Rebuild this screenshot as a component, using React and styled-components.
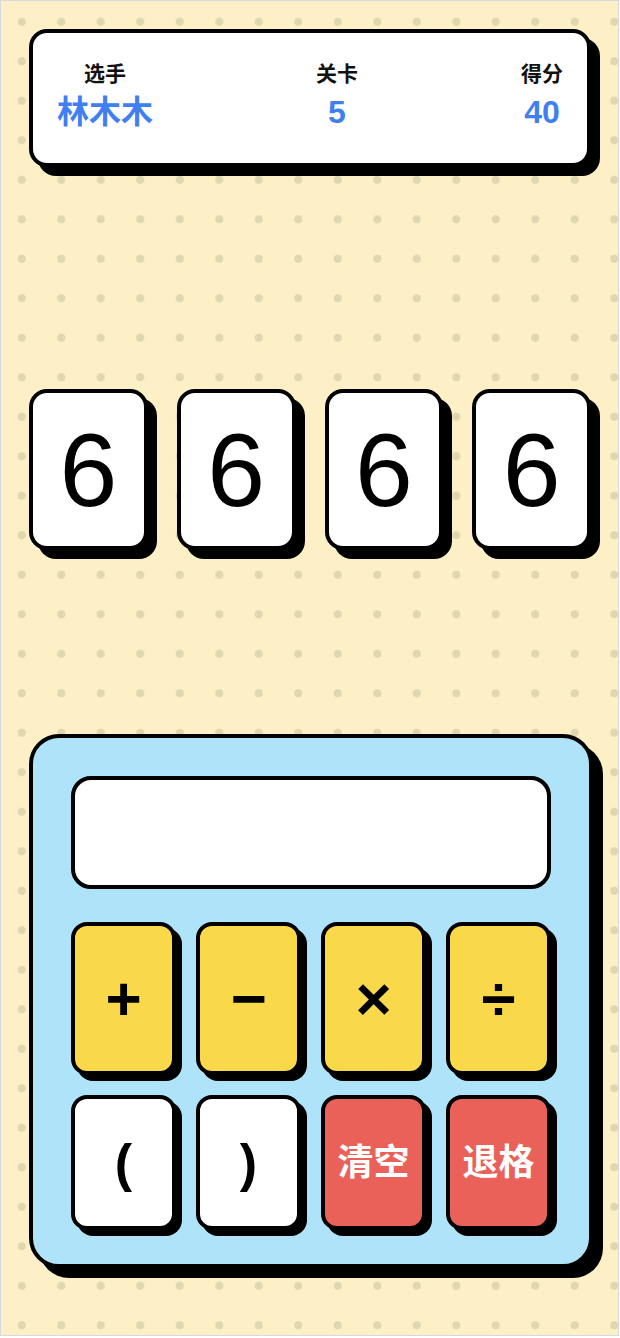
import React from "react";
import styled, { createGlobalStyle } from "styled-components";

const Global = createGlobalStyle`
  html, body { margin: 0; padding: 0; background: #ffffff; }
  body { font-family: "Liberation Sans", "Noto Sans CJK SC", sans-serif; }
  * { box-sizing: border-box; }
`;

const Page = styled.div`
  width: 619px;
  height: 1336px;
  border: 1px solid #d6d9df;
  background-color: #fdf0c7;
  background-image: radial-gradient(circle, #e0d7b1 3.9px, transparent 4.4px);
  background-size: 39.5px 39.5px;
  background-position: 1px 1px;
  padding: 28px 0 0 28px;
  display: flex;
  flex-direction: column;
`;

const Card = styled.div`
  background: ${(p) => p.$bg || "#ffffff"};
  border: 4px solid #000;
  border-radius: ${(p) => p.$radius || 16}px;
  box-shadow: ${(p) => p.$shadow || 8}px ${(p) => p.$shadow || 8}px 0 #000;
`;

const Header = styled(Card)`
  width: 562px;
  height: 138px;
  padding: 0 24px;
  display: flex;
  justify-content: space-between;
  align-items: center;
`;

const Stat = styled.div`
  display: flex;
  flex-direction: column;
  align-items: center;
  margin-top: -4px;
`;

const Label = styled.div`
  font-size: 21px;
  font-weight: 700;
  line-height: 28px;
  color: #111;
`;

const Value = styled.div`
  font-size: 32px;
  font-weight: 700;
  line-height: 40px;
  margin-top: 4px;
  color: #3f7ff2;
`;

const Digits = styled.div`
  margin-top: 222px;
  width: 562px;
  display: flex;
  gap: 29px;
`;

const DigitCard = styled(Card)`
  flex: 1;
  height: 161px;
  display: flex;
  align-items: center;
  justify-content: center;
  font-size: 104px;
  color: #000;
  line-height: 1;
`;

const Calc = styled(Card)`
  margin-top: 184px;
  width: 564px;
  height: 534px;
  padding: 38px 38px 34px;
  display: flex;
  flex-direction: column;
`;

const Screen = styled.div`
  height: 113px;
  background: #fff;
  border: 4px solid #000;
  border-radius: 20px;
`;

const Keys = styled.div`
  margin-top: 33px;
  display: grid;
  grid-template-columns: repeat(4, 1fr);
  grid-template-rows: 153px 135px;
  gap: 20px;
`;

const Key = styled.button`
  font-family: "Liberation Sans", "Noto Sans CJK SC", sans-serif;
  background: ${(p) => p.$bg};
  color: ${(p) => p.$fg || "#000"};
  border: 4px solid #000;
  border-radius: 16px;
  box-shadow: 6px 6px 0 #000;
  font-size: ${(p) => p.$size || 44}px;
  font-weight: 700;
  line-height: 1;
  display: flex;
  align-items: center;
  justify-content: center;
  padding: 0;
  cursor: pointer;
`;

const stats = [
  { label: "选手", value: "林木木" },
  { label: "关卡", value: "5" },
  { label: "得分", value: "40" },
];

const keys = [
  { t: "+", bg: "#f9d84a", size: 62 },
  { t: "−", bg: "#f9d84a", size: 62 },
  { t: "×", bg: "#f9d84a", size: 62 },
  { t: "÷", bg: "#f9d84a", size: 62 },
  { t: "(", bg: "#ffffff", size: 52 },
  { t: ")", bg: "#ffffff", size: 52 },
  { t: "清空", bg: "#ea615a", fg: "#fff", size: 36 },
  { t: "退格", bg: "#ea615a", fg: "#fff", size: 36 },
];

export default function App() {
  return (
    <>
      <Global />
      <Page>
        <Header $radius={18} $shadow={9}>
          {stats.map((s) => (
            <Stat key={s.label}>
              <Label>{s.label}</Label>
              <Value>{s.value}</Value>
            </Stat>
          ))}
        </Header>
        <Digits>
          {[6, 6, 6, 6].map((d, i) => (
            <DigitCard key={i} $radius={18} $shadow={9}>
              {d}
            </DigitCard>
          ))}
        </Digits>
        <Calc $bg="#aee3f9" $radius={30} $shadow={10}>
          <Screen />
          <Keys>
            {keys.map((k) => (
              <Key key={k.t} $bg={k.bg} $fg={k.fg} $size={k.size}>
                {k.t}
              </Key>
            ))}
          </Keys>
        </Calc>
      </Page>
    </>
  );
}
